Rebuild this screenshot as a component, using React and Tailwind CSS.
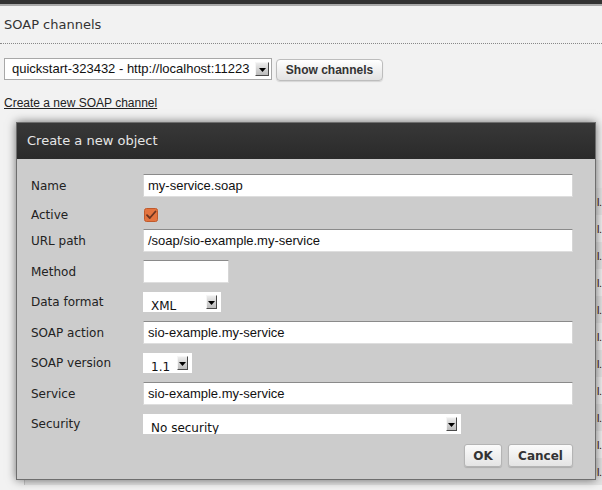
import React from "react";

const DJ = "font-['DejaVu_Sans',Verdana,sans-serif]";
const AR = "font-['Liberation_Sans',Arial,sans-serif]";

function Arrow({ big }) {
  return (
    <div
      className={`flex items-center justify-center ${big ? "w-[14px] h-[14px]" : "w-[11px] h-[14px]"} bg-gradient-to-b from-[#ececec] to-[#bcbcbc] border border-t-[#f6f6f6] border-l-[#f6f6f6] border-r-[#4a4a4a] border-b-[#4a4a4a]`}
    >
      <svg width="7" height="4" viewBox="0 0 7 4" className="mt-[2px]">
        <path d="M0 0h7L3.5 4z" fill="#000" />
      </svg>
    </div>
  );
}

function Input({ value, w }) {
  return (
    <div
      className={`${w ? w : "flex-1"} h-[23px] bg-white border border-t-[#8a8a8a] border-l-[#d6d6d6] border-r-[#d6d6d6] border-b-[#dedede] pl-[4px] flex items-center text-[13px] text-[#111] ${AR}`}
    >
      {value}
    </div>
  );
}

function DSelect({ value, w }) {
  return (
    <div className={`${w} h-[20px] bg-white relative overflow-hidden`}>
      <div className={`pl-[8px] pt-[7px] text-[12px] leading-[14px] text-[#111] ${DJ}`}>{value}</div>
      <div className="absolute right-[4px] top-[3px]">
        <Arrow />
      </div>
    </div>
  );
}

function Row({ label, mt, h, children }) {
  return (
    <div className={`flex items-center ${mt} ${h}`}>
      <div className={`w-[112px] shrink-0 text-[12px] text-[#222] ${DJ}`}>{label}</div>
      {children}
    </div>
  );
}

function Btn({ children, w }) {
  return (
    <div
      className={`${w} h-[23px] flex items-center justify-center rounded-[3px] border border-[#b4b4b4] bg-gradient-to-b from-[#fbfbfb] to-[#e4e4e4] shadow-[0_1px_1px_rgba(0,0,0,0.15)] text-[12px] font-bold text-[#333] ${DJ}`}
    >
      {children}
    </div>
  );
}

export default function App() {
  const rows = Array.from({ length: 11 });
  return (
    <div className="relative w-[602px] h-[490px] overflow-hidden bg-[#f2f2f2]">
      <div className="h-[4px] bg-[#333]" />
      <div className="h-[2px] bg-[#aaa]" />
      <div
        className={`pt-[11px] pb-[10px] px-[4px] border-b border-dotted border-[#888] text-[13px] leading-[16px] text-[#333] ${DJ}`}
      >
        SOAP channels
      </div>

      <div className="mt-[14px] ml-[4px] flex items-start gap-[4px]">
        <div
          className={`relative w-[268px] h-[22px] bg-white border border-[#a8a8a8] pl-[7px] flex items-center text-[13px] text-[#111] whitespace-nowrap ${AR}`}
        >
          quickstart-323432 - http://localhost:11223
          <div className="absolute right-[2px] top-[3px]">
            <Arrow big />
          </div>
        </div>
        <div
          className={`mt-[1px] w-[107px] h-[22px] flex items-center justify-center rounded-[4px] border border-[#bdbdbd] bg-gradient-to-b from-[#ffffff] to-[#e2e2e2] shadow-[0_1px_1px_rgba(0,0,0,0.12)] text-[12px] font-bold text-[#333] ${AR}`}
        >
          Show channels
        </div>
      </div>

      <div className={`mt-[15px] ml-[4px] text-[12px] leading-[14px] ${AR}`}>
        <a className="text-[#222] underline">Create a new SOAP channel</a>
      </div>

      <div className="mt-[50px] ml-[24px] border-l border-[#c8c8c8]">
        <div className="h-[28px] bg-[#eaeaea]" />
        {rows.map((_, i) => (
          <div
            key={i}
            className={`h-[27px] flex items-center whitespace-nowrap ${i % 2 === 0 ? "bg-[#e4e4e4]" : "bg-[#efefef]"}`}
          >
            <div className="w-[572px] shrink-0" />
            <span className={`text-[11px] leading-[12px] tracking-[-0.5px] text-[#4a1a0a] ${AR}`}>l.</span>
          </div>
        ))}
      </div>

      {/* dialog */}
      <div className="absolute left-[16px] top-[122px] w-[580px] h-[358px] border border-[#6e6e6e] bg-[#cccccc] shadow-[0_0_9px_rgba(0,0,0,0.55)] flex flex-col">
        <div
          className={`h-[36px] shrink-0 bg-gradient-to-b from-[#383838] to-[#2a2a2a] pl-[10px] flex items-center text-[13px] text-[#e6e6e6] ${DJ}`}
        >
          Create a new object
        </div>
        <div className="pt-[15px] pl-[14px] pr-[22px] flex flex-col">
          <Row label="Name" mt="" h="h-[23px]">
            <Input value="my-service.soap" />
          </Row>
          <Row label="Active" mt="mt-[6px]" h="h-[23px]">
            <svg width="14" height="14" viewBox="0 0 14 14" className="ml-[1px]">
              <rect x="0.5" y="0.5" width="13" height="13" rx="2" fill="#e4743f" stroke="#c05a2c" />
              <path d="M3 7.2 L5.8 10 L11.5 3.5" fill="none" stroke="#6b3420" strokeWidth="1.8" strokeLinecap="round" strokeLinejoin="round" />
            </svg>
          </Row>
          <Row label="URL path" mt="mt-[3px]" h="h-[23px]">
            <Input value="/soap/sio-example.my-service" />
          </Row>
          <Row label="Method" mt="mt-[8px]" h="h-[23px]">
            <Input value="" w="w-[86px]" />
          </Row>
          <Row label="Data format" mt="mt-[9px]" h="h-[20px]">
            <DSelect value="XML" w="w-[78px]" />
          </Row>
          <Row label="SOAP action" mt="mt-[9px]" h="h-[23px]">
            <Input value="sio-example.my-service" />
          </Row>
          <Row label="SOAP version" mt="mt-[9px]" h="h-[20px]">
            <DSelect value="1.1" w="w-[49px]" />
          </Row>
          <Row label="Service" mt="mt-[9px]" h="h-[23px]">
            <Input value="sio-example.my-service" />
          </Row>
          <Row label="Security" mt="mt-[9px]" h="h-[20px]">
            <DSelect value="No security" w="w-[318px]" />
          </Row>
          <div className="mt-[10px] flex justify-end gap-[6px]">
            <Btn w="w-[38px]">OK</Btn>
            <Btn w="w-[65px]">Cancel</Btn>
          </div>
        </div>
      </div>
    </div>
  );
}
